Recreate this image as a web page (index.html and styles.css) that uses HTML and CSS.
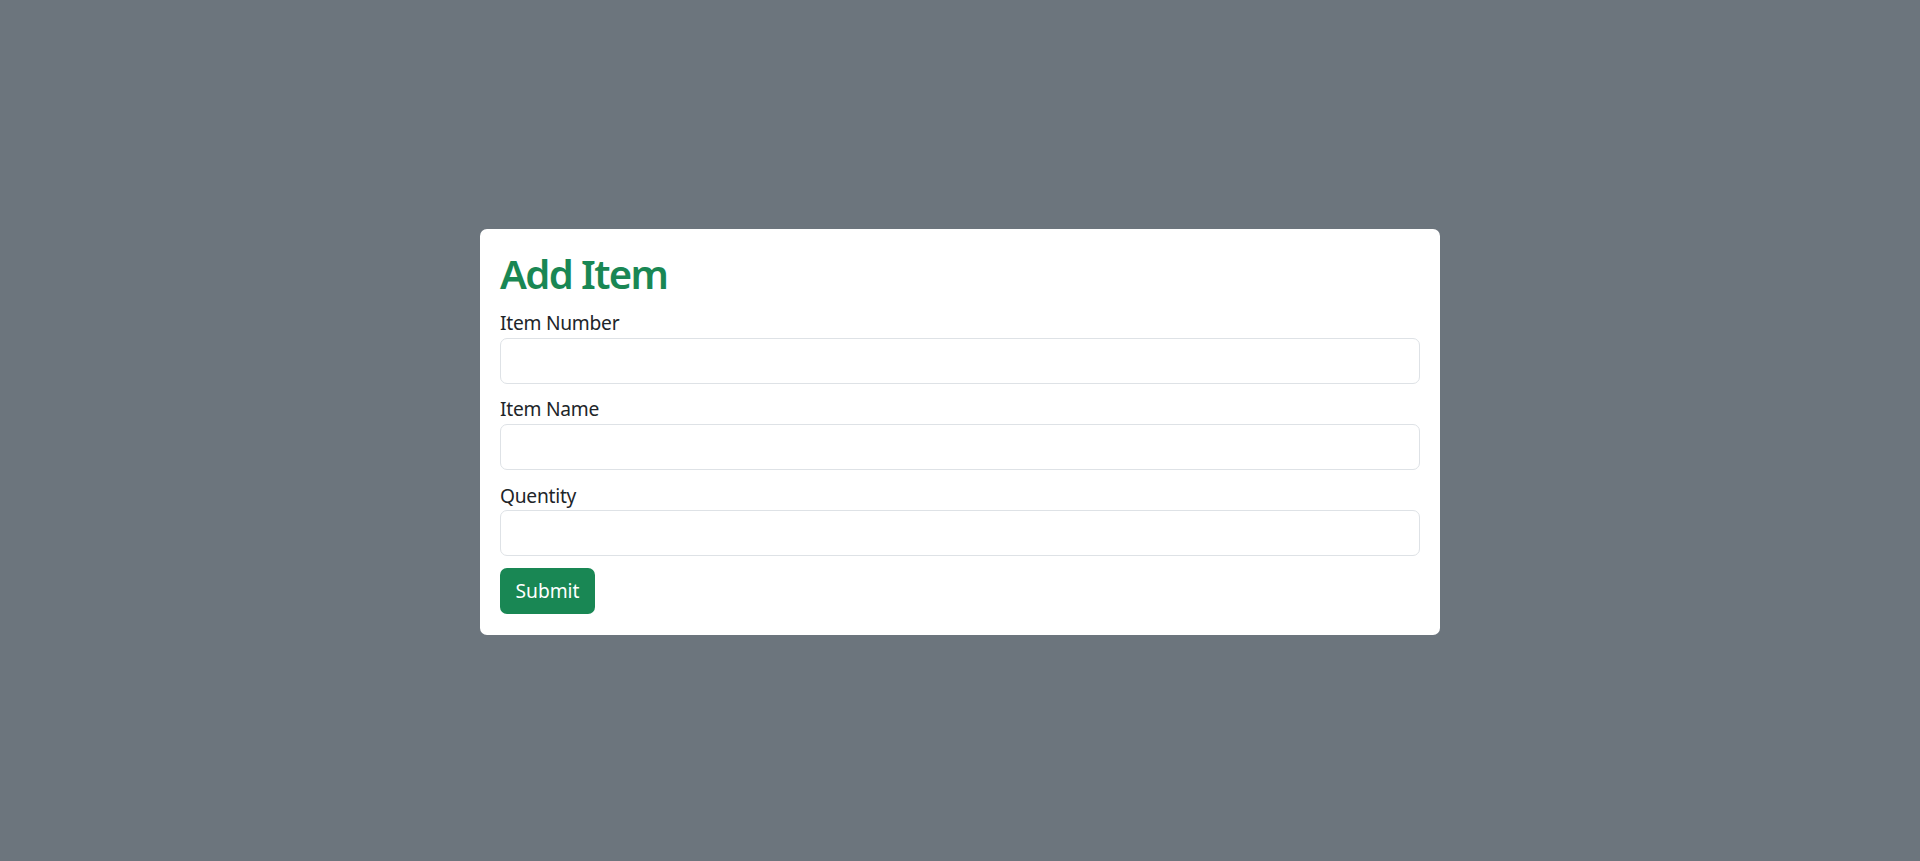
FILE: index.html
```html
<!DOCTYPE html>
<html lang="en">
<head>
<meta charset="utf-8">
<title>Add Item</title>
<link rel="stylesheet" href="styles.css">
</head>
<body>
<main class="page">
  <form class="card">
    <h1 class="title">Add Item</h1>
    <div class="field">
      <label class="label" for="num">Item Number</label>
      <input class="input" id="num" type="text">
    </div>
    <div class="field">
      <label class="label" for="name">Item Name</label>
      <input class="input" id="name" type="text">
    </div>
    <div class="field">
      <label class="label" for="qty">Quentity</label>
      <input class="input" id="qty" type="text">
    </div>
    <button class="btn" type="button">Submit</button>
  </form>
</main>
</body>
</html>
```
FILE: styles.css
```css
* { box-sizing: border-box; }
html, body { margin: 0; padding: 0; }
body {
  background: #6c757d;
  font-family: "Noto Sans", "Open Sans", sans-serif;
  color: #212529;
  font-size: 19.2px;
  line-height: 1.5;
}
.page {
  min-height: 100vh;
  display: flex;
  align-items: center;
  justify-content: center;
  padding-top: 3px;
}
.card {
  width: 960px;
  background: #fff;
  border-radius: 7px;
  padding: 20px 20px 21px;
}
.title {
  margin: 0 0 9.6px;
  font-size: 40px;
  line-height: 50.4px;
  font-weight: 600;
  letter-spacing: -1.6px;
  color: #198754;
}
.field { margin-bottom: 11.5px; }
.label {
  display: block;
  font-size: 19.2px;
  line-height: 28.8px;
  letter-spacing: -0.25px;
}
.input {
  display: block;
  width: 100%;
  height: 46px;
  border: 1px solid #dee2e6;
  border-radius: 7px;
  background: #fff;
  font: inherit;
  padding: 0 14px;
}
.btn {
  display: block;
  height: 46px;
  width: 95px;
  border: 0;
  border-radius: 7px;
  background: #198754;
  color: #fff;
  font: inherit;
  font-size: 19.2px;
  padding: 0;
}
```
